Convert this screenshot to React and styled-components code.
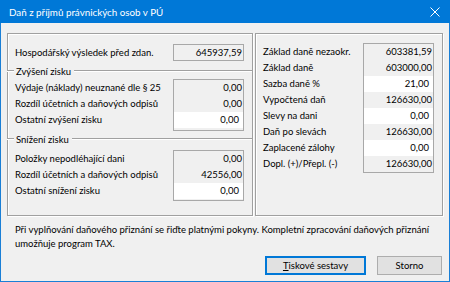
import React from "react";
import styled, { createGlobalStyle } from "styled-components";

const Global = createGlobalStyle`
  html, body { margin: 0; padding: 0; }
  body { width: 450px; height: 282px; overflow: hidden; background: #f0f0f0; }
  * { box-sizing: border-box; }
`;

const Window = styled.div`
  width: 450px;
  height: 282px;
  display: flex;
  flex-direction: column;
  background: #f0f0f0;
  border: 1px solid #1a7fd6;
  border-top: none;
  font-family: Lato, "Noto Sans", "Liberation Sans", sans-serif;
  font-size: 9.5px;
  color: #000;
`;

const TitleBar = styled.div`
  height: 23px;
  margin: 0 -1px;
  background: #0078d7;
  color: #fff;
  display: flex;
  align-items: center;
  justify-content: space-between;
  padding: 0 8px 0 9px;
  font-size: 9.8px;
  flex-shrink: 0;
`;

const CloseBtn = styled.div`
  width: 10px;
  height: 10px;
  display: flex;
  margin-right: 2px;
`;

const Body = styled.div`
  flex: 1;
  display: flex;
  flex-direction: column;
  padding: 10px 6px 0 6px;
`;

const Panels = styled.div`
  display: flex;
  gap: 2px;
  height: 183px;
`;

const Panel = styled.div`
  border: 1px solid #a0a0a0;
  box-shadow: inset 1px 1px 0 #fff, 1px 1px 0 #fff;
  display: flex;
  flex-direction: column;
  width: ${(p) => p.$w}px;
  padding-top: ${(p) => p.$pt}px;
`;

const Section = styled.div`
  display: flex;
  align-items: flex-start;
  padding: 0 ${(p) => p.$pr}px 0 7px;
`;

const Labels = styled.div`
  flex: 1;
  display: flex;
  flex-direction: column;
  padding-top: 1px;
`;

const Label = styled.div`
  height: ${(p) => p.$h}px;
  line-height: ${(p) => p.$h}px;
  white-space: nowrap;
`;

const FieldBox = styled.div`
  width: 71px;
  border: 1px solid #a8a8a8;
  display: flex;
  flex-direction: column;
  padding-bottom: ${(p) => p.$pb || 0}px;
`;

const Cell = styled.div`
  height: ${(p) => p.$h}px;
  line-height: ${(p) => p.$h}px;
  text-align: right;
  background: ${(p) => (p.$edit ? "#fff" : "transparent")};
  padding-right: ${(p) => (p.$edit ? 4 : 1)}px;
`;

const GroupHeader = styled.div`
  display: flex;
  align-items: center;
  height: 14px;
  margin-top: ${(p) => p.$mt}px;
  margin-bottom: ${(p) => p.$mb}px;
  margin-left: -1px;
`;

const Rule = styled.div`
  height: 2px;
  border-top: 1px solid #a0a0a0;
  border-bottom: 1px solid #fff;
  width: ${(p) => (p.$w ? `${p.$w}px` : "auto")};
  flex: ${(p) => (p.$w ? "none" : 1)};
`;

const GroupTitle = styled.span`
  padding: 0 3px 0 2px;
  white-space: nowrap;
`;

const Note = styled.div`
  margin-top: 7px;
  padding-left: 8px;
  line-height: 14px;
  white-space: nowrap;
`;

const Buttons = styled.div`
  display: flex;
  justify-content: flex-end;
  gap: 11px;
  margin-top: 5px;
  padding-right: 1px;
`;

const Button = styled.div`
  width: ${(p) => p.$w}px;
  height: 19px;
  display: flex;
  align-items: center;
  justify-content: center;
  background: #e1e1e1;
  border: 1px solid ${(p) => (p.$default ? "#0078d7" : "#adadad")};
  box-shadow: ${(p) => (p.$default ? "inset 0 0 0 1px #0078d7" : "none")};
`;

const U = styled.span`
  text-decoration: underline;
`;

function Block({ rows, h, pr, pb }) {
  return (
    <Section $pr={pr}>
      <Labels>
        {rows.map((r) => (
          <Label key={r[0]} $h={h}>
            {r[0]}
          </Label>
        ))}
      </Labels>
      <FieldBox $pb={pb}>
        {rows.map((r) => (
          <Cell key={r[0]} $h={h} $edit={r[2]}>
            {r[1]}
          </Cell>
        ))}
      </FieldBox>
    </Section>
  );
}

export default function App() {
  return (
    <>
      <Global />
      <Window>
        <TitleBar>
          <span>Daň z příjmů právnických osob v PÚ</span>
          <CloseBtn>
            <svg width="10" height="10" viewBox="0 0 10 10">
              <path d="M0.5 0.5 L9.5 9.5 M9.5 0.5 L0.5 9.5" stroke="#fff" strokeWidth="1" />
            </svg>
          </CloseBtn>
        </TitleBar>
        <Body>
          <Panels>
            <Panel $w={246} $pt={10}>
              <Block pr={8} h={15} rows={[["Hospodářský výsledek před zdan.", "645937,59", false]]} />
              <GroupHeader $mt={3} $mb={1}>
                <Rule $w={7} />
                <GroupTitle>Zvýšení zisku</GroupTitle>
                <Rule />
              </GroupHeader>
              <Block
                pr={8}
                h={16}
                pb={2}
                rows={[
                  ["Výdaje (náklady) neuznané dle § 25", "0,00", false],
                  ["Rozdíl účetních a daňových odpisů", "0,00", false],
                  ["Ostatní zvýšení zisku", "0,00", true],
                ]}
              />
              <GroupHeader $mt={1} $mb={4}>
                <Rule $w={7} />
                <GroupTitle>Snížení zisku</GroupTitle>
                <Rule />
              </GroupHeader>
              <Block
                pr={8}
                h={16}
                pb={1}
                rows={[
                  ["Položky nepodléhající dani", "0,00", false],
                  ["Rozdíl účetních a daňových odpisů", "42556,00", false],
                  ["Ostatní snížení zisku", "0,00", true],
                ]}
              />
            </Panel>
            <Panel $w={188} $pt={9}>
              <Block
                pr={8}
                h={16}
                rows={[
                  ["Základ daně nezaokr.", "603381,59", false],
                  ["Základ daně", "603000,00", false],
                  ["Sazba daně %", "21,00", true],
                  ["Vypočtená daň", "126630,00", false],
                  ["Slevy na dani", "0,00", true],
                  ["Daň po slevách", "126630,00", false],
                  ["Zaplacené zálohy", "0,00", true],
                  ["Dopl. (+)/Přepl. (-)", "126630,00", false],
                ]}
              />
            </Panel>
          </Panels>
          <Note>
            Při vyplňování daňového přiznání se řiďte platnými pokyny. Kompletní zpracování daňových přiznání
            <br />
            umožňuje program TAX.
          </Note>
          <Buttons>
            <Button $w={101} $default>
              <span>
                <U>T</U>iskové sestavy
              </span>
            </Button>
            <Button $w={65}>Storno</Button>
          </Buttons>
        </Body>
      </Window>
    </>
  );
}
